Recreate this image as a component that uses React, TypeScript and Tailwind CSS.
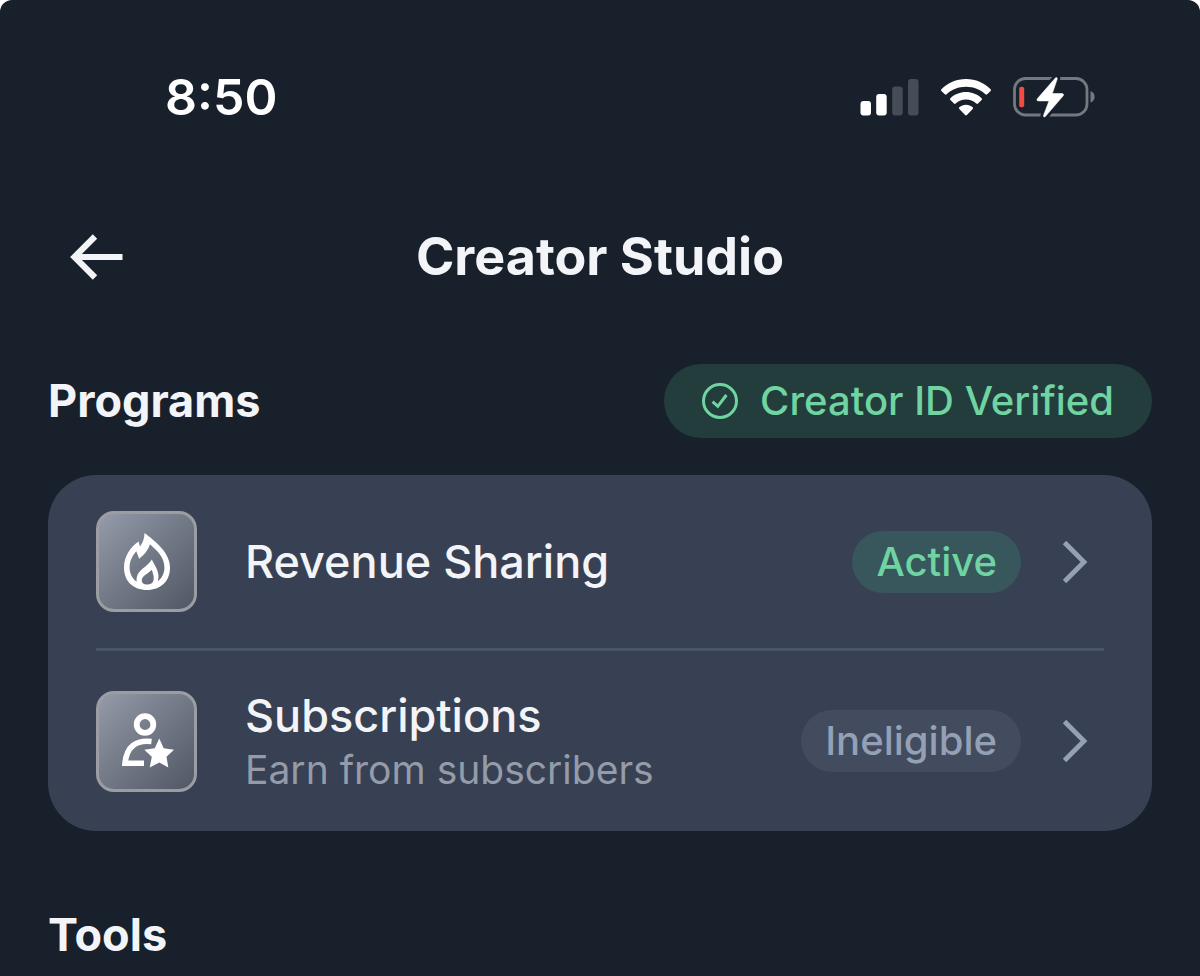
import type { ReactNode } from "react";

function SignalIcon() {
  return (
    <svg width="59" height="37" viewBox="0 0 59 37" aria-hidden="true">
      <rect x="0.500" y="22" width="10.500" height="14.500" rx="3" fill="#fff" />
      <rect x="16.200" y="15" width="10.500" height="21.500" rx="3" fill="#fff" />
      <rect x="32.200" y="7.500" width="10.500" height="29" rx="3" fill="#474d56" />
      <rect x="48" y="0" width="10.500" height="36.500" rx="3" fill="#474d56" />
    </svg>
  );
}

function WifiIcon() {
  return (
    <svg width="50" height="37" viewBox="0 0 50 37" fill="#fff" aria-hidden="true">
      <path d="M25 0C34.700 0 43.400 3.800 49.600 10.200Q50.400 11 49.600 11.900L46.200 15.300Q45.300 16.100 44.400 15.300C39.300 10.400 32.500 7.700 25 7.700S10.700 10.400 5.600 15.300Q4.700 16.100 3.800 15.300L0.400 11.900Q-0.400 11 0.400 10.200C6.600 3.800 15.300 0 25 0Z" />
      <path d="M25 13C31 13 36.500 15.300 40.600 19.200Q41.500 20.100 40.600 21L37 24.500Q36.200 25.300 35.300 24.500C32.500 22 29 20.600 25 20.600S17.500 22 14.700 24.500Q13.800 25.300 13 24.500L9.400 21Q8.500 20.100 9.400 19.200C13.500 15.300 19 13 25 13Z" />
      <path d="M25 25.800C27.500 25.800 29.900 26.700 31.700 28.200Q32.600 29 31.700 30L25.900 36Q25 36.800 24.100 36L18.300 30Q17.400 29 18.300 28.200C20.100 26.700 22.500 25.800 25 25.800Z" />
    </svg>
  );
}

function BatteryIcon() {
  const bolt =
    "M42.400 1C43.500 0 44.700 0.800 44.100 2.300L39.300 16.600H49C50.600 16.600 51 17.800 50 19L32.500 39.300C31.300 40.500 30 39.700 30.600 38.200L36 23.900H25.400C23.900 23.900 23.500 22.700 24.500 21.500Z";
  return (
    <svg width="83" height="41" viewBox="0 0 83 41" aria-hidden="true">
      <rect x="1.500" y="1.500" width="72.500" height="36.500" rx="11" fill="none" stroke="#747980" strokeWidth="2.800" />
      <path d="M77.500 14C83 15.700 83 23.900 77.500 25.600Z" fill="#747980" />
      <rect x="6.200" y="9.800" width="5" height="20.500" rx="2" fill="#f24b41" />
      <path d={bolt} fill="#fff" stroke="#18202b" strokeWidth="6" strokeLinejoin="round" />
      <path d={bolt} fill="#fff" stroke="#fff" strokeWidth="0.600" />
    </svg>
  );
}

function BackIcon() {
  return (
    <svg width="54" height="46" viewBox="0 0 54 46" fill="none" stroke="#f3f4f7" strokeWidth="6.200" aria-hidden="true">
      <path d="M26 2.500L5.500 23L26 43.500M5.500 23H53.500" />
    </svg>
  );
}

function VerifiedIcon() {
  return (
    <svg width="36" height="36" viewBox="0 0 36 36" fill="none" stroke="#6fd3a2" aria-hidden="true">
      <circle cx="18" cy="18" r="16.500" strokeWidth="3" />
      <path d="M10.600 18.700L15.800 23.400L24.400 12" strokeWidth="3" />
    </svg>
  );
}

function FlameIcon() {
  return (
    <svg width="48" height="58" viewBox="0 0 48 58" aria-hidden="true">
      <path
        fill="#fff"
        fillRule="evenodd"
        d="M21.500 0C32 8 47 19.500 47 34.500C47 48.500 37.500 57 24 57S1 48.500 1 34.500C1 24.500 6.500 14.500 15.500 8.500L17 13.500C19.800 9.800 21.500 5.200 21.500 0ZM26.800 11.300C25.500 16.800 21.500 21.500 16.200 25.800L13.300 18.200C9.300 22.600 6.600 28.400 6.600 34.500C6.600 40.500 9.300 45.800 13.700 48.700C12.700 36.500 23.500 35.500 28.800 26.500C32 33 37.500 39.500 34.800 48.300C38.800 45.300 41.400 40.500 41.400 34.500C41.400 24.700 34.500 17.800 26.800 11.300ZM28.600 36.800C25.200 41.200 18.800 42.200 18.800 47.500C18.800 50.300 21 51.500 24.200 51.500C27.500 51.500 30 50.100 30.600 46.900C31.200 43.500 29.800 39.800 28.600 36.800Z"
      />
    </svg>
  );
}

function SubscriberIcon() {
  return (
    <svg width="54" height="56" viewBox="0 0 54 56" fill="none" aria-hidden="true">
      <circle cx="25" cy="11.500" r="8.300" stroke="#fff" strokeWidth="5.800" />
      <path d="M31.500 28.500C16 26.500 6.500 34 5 50.300H24" stroke="#fff" strokeWidth="5.600" />
      <path
        d="M39.300 25.500L43.700 35.200L54 36.700L46.500 43.800L48.300 54.500L39.300 49.500L29.700 54.500L31.800 43.800L24.300 36.700L34.700 35.200Z"
        fill="#fff"
      />
    </svg>
  );
}

function ChevronIcon() {
  return (
    <svg width="26" height="44" viewBox="0 0 26 44" fill="none" stroke="#94a0b5" strokeWidth="4.800" aria-hidden="true">
      <path d="M2.500 2.500L22 22L2.500 41.500" />
    </svg>
  );
}

interface ProgramProps {
  icon: ReactNode;
  title: string;
  detail?: string;
  status: string;
  eligible: boolean;
}

function Program({ icon, title, detail, status, eligible }: ProgramProps) {
  return (
    <li>
      <a href="#" className="flex min-h-[173px] items-center py-[34px]">
        <span className="flex size-[101px] shrink-0 items-center justify-center rounded-[18px] border-[3px] border-[#9b9da2] bg-linear-to-br from-[#959ba8] to-[#505765]">
          {icon}
        </span>
        <span className={detail ? "ml-12 flex min-w-0 flex-1 flex-col pt-1" : "ml-12 flex min-w-0 flex-1 flex-col"}>
          <span className="text-[45px] leading-[54px] font-medium text-[#f3f4f7]">{title}</span>
          {detail && <span className="text-[39px] leading-[54px] text-[#949ba9]">{detail}</span>}
        </span>
        <span
          className={
            eligible
              ? "flex h-[62px] items-center rounded-full bg-[#37575c] px-6 text-[40px] font-medium text-[#6fd3a2]"
              : "flex h-[62px] items-center rounded-full bg-[#424c5e] px-6 text-[40px] font-medium text-[#94a0b5]"
          }
        >
          {status}
        </span>
        <span className="mr-4 ml-[41px]">
          <ChevronIcon />
        </span>
      </a>
    </li>
  );
}

export default function App() {
  return (
    <div className="min-h-screen rounded-t-xl bg-[#18202b] px-12 font-['Inter','Liberation_Sans',sans-serif] text-[#f3f4f7]">
      <div className="flex h-[194px] items-center justify-between pr-14 pl-[117px]">
        <span className="text-[50px] font-semibold text-white">8:50</span>
        <div className="flex items-center gap-[22px]">
          <SignalIcon />
          <WifiIcon />
          <BatteryIcon />
        </div>
      </div>

      <header className="grid h-[126px] grid-cols-[1fr_auto_1fr] items-center">
        <button type="button" aria-label="Back" className="ml-[21px] w-fit">
          <BackIcon />
        </button>
        <h1 className="text-[52px] font-bold">Creator Studio</h1>
      </header>

      <main>
        <section>
          <div className="mt-11 flex items-center justify-between">
            <h2 className="text-[45px] font-bold">Programs</h2>
            <div className="flex h-[74px] items-center gap-[22px] rounded-full bg-[#233d3c] px-[38px] text-[40px] font-medium text-[#6fd3a2]">
              <VerifiedIcon />
              <span>Creator ID Verified</span>
            </div>
          </div>
          <ul className="mt-[37px] divide-y-[3px] divide-[#4a5568] rounded-[48px] bg-[#374153] px-12">
            <Program icon={<FlameIcon />} title="Revenue Sharing" status="Active" eligible />
            <Program
              icon={<SubscriberIcon />}
              title="Subscriptions"
              detail="Earn from subscribers"
              status="Ineligible"
              eligible={false}
            />
          </ul>
        </section>
        <section>
          <h2 className="mt-[70px] text-[45px] leading-[68px] font-bold">Tools</h2>
        </section>
      </main>
    </div>
  );
}
